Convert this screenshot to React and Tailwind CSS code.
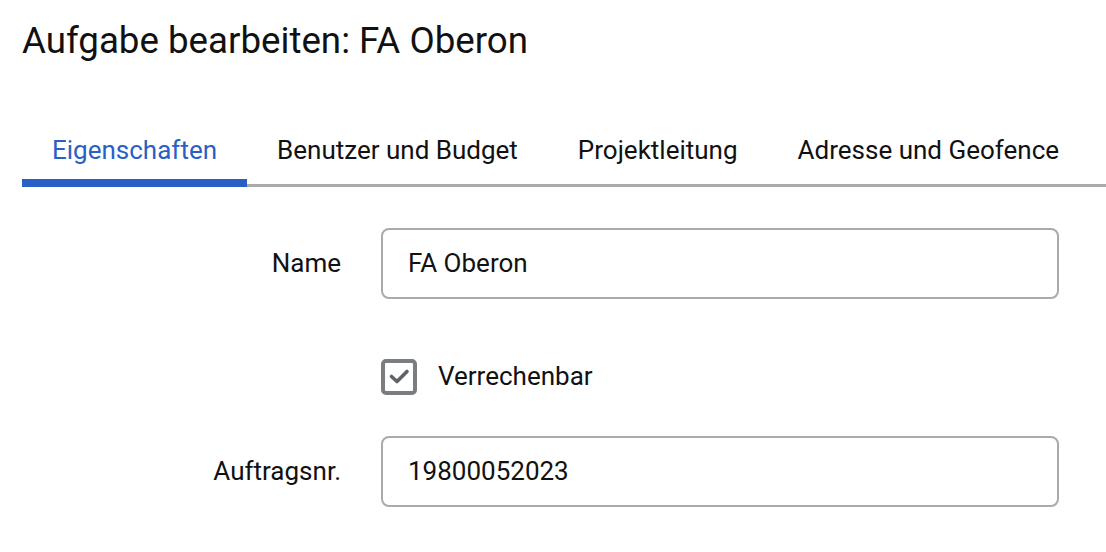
import React, { useState } from 'react';

const tabs = ['Eigenschaften', 'Benutzer und Budget', 'Projektleitung', 'Adresse und Geofence'];

function Field({ label, value }) {
  return (
    <div className="flex items-center">
      <label className="w-[341px] pr-0 text-right text-[26px] text-[#111]">{label}</label>
      <div className="ml-10 flex h-[71px] w-[678px] items-center rounded-lg border-2 border-[#aaaaaa] px-[25px] text-[26px] text-[#111]">
        {value}
      </div>
    </div>
  );
}

export default function App() {
  const [active, setActive] = useState(0);
  const [billable, setBillable] = useState(true);

  return (
    <div className="h-[552px] w-[1106px] overflow-hidden bg-white font-['Roboto',sans-serif]">
      <h1 className="pl-[22px] pt-[19px] text-[36.7px] leading-[44px] text-[#111]">Aufgabe bearbeiten: FA Oberon</h1>

      <div className="ml-[22px] mt-[72px] flex items-end">
        {tabs.map((t, i) => (
          <button
            key={t}
            onClick={() => setActive(i)}
            className={`relative px-[30px] pb-[22px] text-[26px] leading-[30px] ${i === active ? 'text-[#2a5fc6]' : 'text-[#111]'}`}
          >
            {t}
            <span className={`absolute bottom-0 left-0 right-0 ${i === active ? 'h-[8px] bg-[#2a5fc6]' : 'h-[3px] bg-[#aaaaaa]'}`}></span>
          </button>
        ))}
        <div className="h-[3px] flex-1 bg-[#aaaaaa]"></div>
      </div>

      <div className="mt-[41px]">
        <Field label="Name" value="FA Oberon" />
      </div>

      <div className="ml-[381px] mt-[58px] flex items-center">
        <button
          onClick={() => setBillable(!billable)}
          className="flex h-[36px] w-[36px] items-center justify-center rounded-[5px] border-[4px] border-[#7b7e80]"
        >
          {billable && (
            <svg width="22" height="22" viewBox="0 0 22 22" fill="none">
              <path d="M3.5 10.5 L9 15.5 L19 5.5" stroke="#5f6266" strokeWidth="3.6" strokeLinecap="round" strokeLinejoin="round" />
            </svg>
          )}
        </button>
        <span className="ml-[21px] text-[26px] text-[#111]">Verrechenbar</span>
      </div>

      <div className="mt-[40px]">
        <Field label="Auftragsnr." value="19800052023" />
      </div>
    </div>
  );
}
